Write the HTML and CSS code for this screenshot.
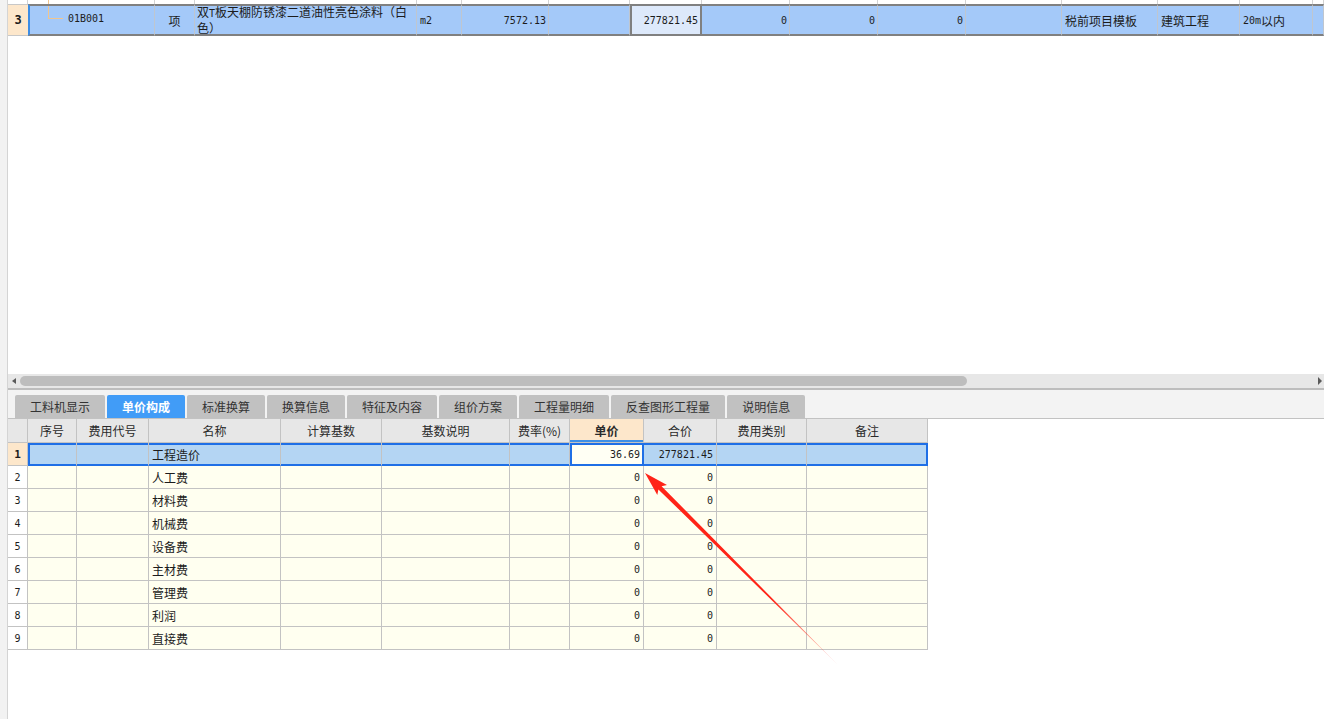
FILE: index.html
```html
<!DOCTYPE html>
<html lang="zh-CN">
<head>
<meta charset="utf-8">
<title>单价构成</title>
<link rel="stylesheet" href="styles.css">
</head>
<body>
<div class="app">
  <div class="gutter"></div>
  <div class="main">
    <section class="upper">
      <div class="trow prev">
        <div class="rn"></div>
        <div class="code"><span class="tree-up"></span></div>
        <div></div><div></div><div></div><div></div><div></div><div></div>
        <div></div><div></div><div></div><div></div><div></div><div></div><div></div><div></div>
      </div>
      <div class="trow sel">
        <div class="rn">3</div>
        <div class="code"><span class="tree"></span><span class="num">01B001</span></div>
        <div class="c">项</div>
        <div class="name"><span class="lines">双<span class="num">T</span>板天棚防锈漆二道油性亮色涂料（白<br>色）</span></div>
        <div><span class="num">m2</span></div>
        <div class="r"><span class="num">7572.13</span></div>
        <div></div>
        <div class="r price"><span class="num">277821.45</span></div>
        <div class="r"><span class="num">0</span></div>
        <div class="r"><span class="num">0</span></div>
        <div class="r"><span class="num">0</span></div>
        <div></div>
        <div>税前项目模板</div>
        <div>建筑工程</div>
        <div><span class="num">20m</span>以内</div>
        <div></div>
      </div>
    </section>

    <div class="hscroll">
      <span class="arr-l"></span>
      <span class="thumb"></span>
      <span class="arr-r"></span>
    </div>

    <nav class="tabbar">
      <div class="tab">工料机显示</div>
      <div class="tab active">单价构成</div>
      <div class="tab">标准换算</div>
      <div class="tab">换算信息</div>
      <div class="tab">特征及内容</div>
      <div class="tab">组价方案</div>
      <div class="tab">工程量明细</div>
      <div class="tab">反查图形工程量</div>
      <div class="tab">说明信息</div>
    </nav>

    <section class="lgrid">
      <div class="h"></div>
      <div class="h">序号</div>
      <div class="h">费用代号</div>
      <div class="h">名称</div>
      <div class="h">计算基数</div>
      <div class="h">基数说明</div>
      <div class="h">费率(%)</div>
      <div class="h active">单价</div>
      <div class="h">合价</div>
      <div class="h">费用类别</div>
      <div class="h">备注</div>

      <div class="rn cur">1</div>
      <div class="sel first"></div>
      <div class="sel"></div>
      <div class="sel">工程造价</div>
      <div class="sel"></div>
      <div class="sel"></div>
      <div class="sel"></div>
      <div class="sel r edit"><span class="num">36.69</span></div>
      <div class="sel r"><span class="num">277821.45</span></div>
      <div class="sel"></div>
      <div class="sel last"></div>

      <div class="rn">2</div><div></div><div></div><div>人工费</div><div></div><div></div><div></div><div class="r"><span class="num">0</span></div><div class="r"><span class="num">0</span></div><div></div><div></div>
      <div class="rn">3</div><div></div><div></div><div>材料费</div><div></div><div></div><div></div><div class="r"><span class="num">0</span></div><div class="r"><span class="num">0</span></div><div></div><div></div>
      <div class="rn">4</div><div></div><div></div><div>机械费</div><div></div><div></div><div></div><div class="r"><span class="num">0</span></div><div class="r"><span class="num">0</span></div><div></div><div></div>
      <div class="rn">5</div><div></div><div></div><div>设备费</div><div></div><div></div><div></div><div class="r"><span class="num">0</span></div><div class="r"><span class="num">0</span></div><div></div><div></div>
      <div class="rn">6</div><div></div><div></div><div>主材费</div><div></div><div></div><div></div><div class="r"><span class="num">0</span></div><div class="r"><span class="num">0</span></div><div></div><div></div>
      <div class="rn">7</div><div></div><div></div><div>管理费</div><div></div><div></div><div></div><div class="r"><span class="num">0</span></div><div class="r"><span class="num">0</span></div><div></div><div></div>
      <div class="rn">8</div><div></div><div></div><div>利润</div><div></div><div></div><div></div><div class="r"><span class="num">0</span></div><div class="r"><span class="num">0</span></div><div></div><div></div>
      <div class="rn">9</div><div></div><div></div><div>直接费</div><div></div><div></div><div></div><div class="r"><span class="num">0</span></div><div class="r"><span class="num">0</span></div><div></div><div></div>
    </section>
  </div>
</div>

<svg class="overlay" width="1324" height="719" viewBox="0 0 1324 719" aria-hidden="true">
  <defs>
    <linearGradient id="fade" gradientUnits="userSpaceOnUse" x1="645" y1="473" x2="838" y2="665">
      <stop offset="0" stop-color="#ff2418" stop-opacity="1"/>
      <stop offset="0.65" stop-color="#ff2418" stop-opacity="1"/>
      <stop offset="1" stop-color="#ff2418" stop-opacity="0.15"/>
    </linearGradient>
  </defs>
  <polygon fill="url(#fade)" points="645,473 667,485 661.6,486.2 838,665 658.4,489.4 657.3,495"/>
</svg>
</body>
</html>
```

FILE: styles.css
```css
* { box-sizing: border-box; }

html, body {
  margin: 0;
  padding: 0;
}

body {
  width: 1324px;
  height: 719px;
  overflow: hidden;
  position: relative;
  background: #ffffff;
  font-family: "Noto Sans CJK SC", "Liberation Sans", sans-serif;
  font-size: 12px;
  color: #1c1c1c;
}

.app {
  display: flex;
  height: 719px;
}

.gutter {
  flex: none;
  width: 8px;
  background: #f2f2f2;
  border-right: 1px solid #d4d4d4;
}

.main {
  flex: 1;
  min-width: 0;
  display: flex;
  flex-direction: column;
}

.num {
  font-family: "DejaVu Sans Mono", "Liberation Mono", monospace;
  font-size: 10px;
}

/* ---------- upper grid ---------- */
.upper {
  flex: none;
  height: 374px;
}

.trow {
  display: grid;
  grid-template-columns: 20px 127px 40px 222px 45px 87px 81px 72px 88px 88px 88px 96px 96px 82px 73px 1fr;
}

.trow.prev { height: 4px; }
.trow.prev > div {
  border-right: 1px solid #d3d3d3;
}
.trow.prev > .code { padding-left: 20px; }
.tree-up {
  display: block;
  width: 1px;
  height: 4px;
  background: #f1c58e;
}

.trow.sel { height: 32px; }
.trow.sel > div {
  background: #a4c9f9;
  border-top: 2px solid #808080;
  border-bottom: 2px solid #808080;
  border-right: 1px solid #bfc6cf;
  display: flex;
  align-items: center;
  padding: 0 3px;
  white-space: nowrap;
  overflow: hidden;
}

.trow.sel > .rn {
  background: #fde7cb;
  border-top: 1px solid #c8c8c8;
  border-bottom: 1px solid #c8c8c8;
  border-right: none;
  justify-content: center;
  padding: 0;
  font-family: "DejaVu Sans Mono", monospace;
  font-weight: bold;
  font-size: 12px;
}

.trow.sel > .code {
  border-left: 2px solid #3c8de6;
  padding-left: 18px;
  align-items: flex-start;
}
.trow.sel > .code .num { margin-top: 7px; }
.tree {
  flex: none;
  width: 15px;
  height: 13px;
  border-left: 1px solid #f1c58e;
  border-bottom: 1px solid #f1c58e;
  margin-right: 5px;
}

.trow.sel > .c { justify-content: center; }
.trow.sel > .r { justify-content: flex-end; padding-right: 2px; }
.trow.sel > .name { padding-left: 2px; }
.lines {
  display: block;
  line-height: 14px;
}

.trow.sel > .price {
  background: #dde9fb;
  border-left: 2px solid #808080;
  border-right: 2px solid #808080;
}

/* ---------- horizontal scrollbar ---------- */
.hscroll {
  flex: none;
  height: 16px;
  background: #e7e7e7;
  border-bottom: 2px solid #bdbdbd;
  display: flex;
  align-items: center;
  padding: 0 2px 0 4px;
}
.arr-l {
  width: 0;
  height: 0;
  border-top: 3px solid transparent;
  border-bottom: 3px solid transparent;
  border-right: 4px solid #5a5a5a;
}
.thumb {
  margin-left: 4px;
  width: 947px;
  height: 10px;
  border-radius: 5px;
  background: #bdbdbd;
}
.arr-r {
  margin-left: auto;
  width: 0;
  height: 0;
  border-top: 4px solid transparent;
  border-bottom: 4px solid transparent;
  border-left: 4px solid #5a5a5a;
}

/* ---------- tabs ---------- */
.tabbar {
  flex: none;
  height: 29px;
  background: #f3f3f3;
  border-bottom: 1px solid #c2c2c2;
  display: flex;
  align-items: flex-end;
  gap: 2px;
  padding-left: 7px;
}
.tab {
  height: 23px;
  padding: 0 15px;
  background: #c1c1c1;
  color: #333333;
  border-radius: 2px 2px 0 0;
  display: flex;
  align-items: center;
  white-space: nowrap;
}
.tab.active {
  background: #419cf7;
  color: #ffffff;
  font-weight: bold;
}

/* ---------- lower grid ---------- */
.lgrid {
  display: grid;
  grid-template-columns: 20px 49px 72px 132px 101px 128px 60px 74px 73px 90px 121px;
  grid-template-rows: 24px repeat(9, 23px);
  width: 920px;
}
.lgrid > div {
  border-right: 1px solid #c3c3c3;
  border-bottom: 1px solid #c3c3c3;
  background: #fffff0;
  display: flex;
  align-items: center;
  padding: 0 3px;
  white-space: nowrap;
  overflow: hidden;
}
.lgrid > .h {
  background: #e7e7e7;
  justify-content: center;
  color: #2a2a2a;
}
.lgrid > .h.active {
  background: #fde7cb;
  font-weight: bold;
  box-shadow: inset 0 -2px 0 #3d8fe6;
}
.lgrid > .rn {
  background: #ffffff;
  justify-content: center;
  padding: 0;
  font-family: "DejaVu Sans Mono", monospace;
  font-size: 10px;
}
.lgrid > .rn.cur {
  background: #fde7cb;
  font-weight: bold;
  font-size: 11px;
}
.lgrid > .r { justify-content: flex-end; padding-right: 3px; }

.lgrid > .sel {
  background: #b4d5f3;
  border-bottom-color: #1f6fe6;
  box-shadow: inset 0 2px 0 #1f6fe6, inset 0 -1px 0 #1f6fe6;
}
.lgrid > .sel.first {
  box-shadow: inset 2px 0 0 #1f6fe6, inset 0 2px 0 #1f6fe6, inset 0 -1px 0 #1f6fe6;
}
.lgrid > .sel.last {
  border-right-color: #1f6fe6;
  box-shadow: inset -1px 0 0 #1f6fe6, inset 0 2px 0 #1f6fe6, inset 0 -1px 0 #1f6fe6;
}
.lgrid > .sel.edit {
  background: #fffff4;
  border-right-color: #1f6fe6;
  box-shadow: inset 2px 0 0 #1f6fe6, inset -1px 0 0 #1f6fe6, inset 0 2px 0 #1f6fe6, inset 0 -1px 0 #1f6fe6;
}

/* ---------- annotation arrow ---------- */
.overlay {
  position: absolute;
  left: 0;
  top: 0;
  pointer-events: none;
}
```
